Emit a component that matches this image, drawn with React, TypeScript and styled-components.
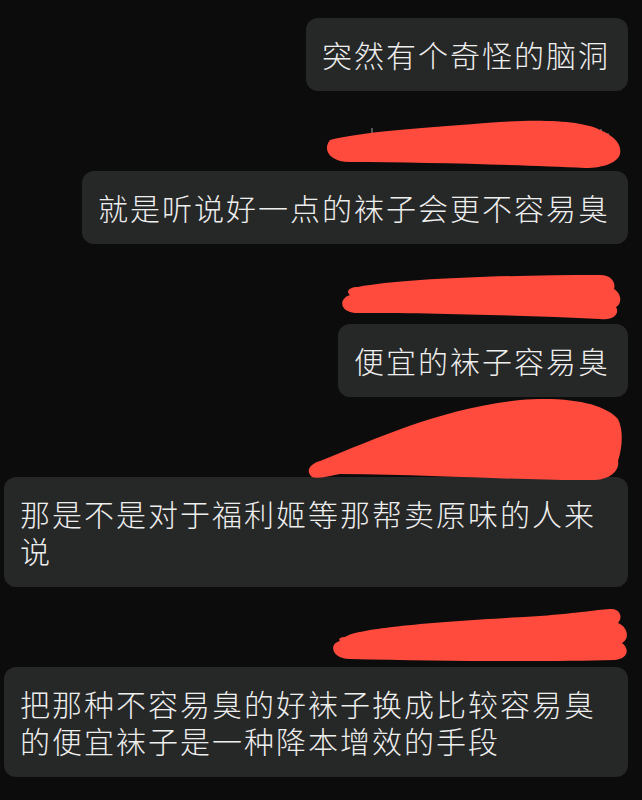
import React from 'react';
import styled, { createGlobalStyle } from 'styled-components';

const GlobalStyle = createGlobalStyle`
  html, body {
    margin: 0;
    padding: 0;
    background: #0c0c0c;
  }
  body {
    font-family: "Noto Sans CJK SC", "Noto Sans", sans-serif;
  }
`;

const Screen = styled.div`
  width: 642px;
  height: 800px;
  overflow: hidden;
  box-sizing: border-box;
  padding: 18px 14px 0 4px;
  background: #0c0c0c;
  display: flex;
  flex-direction: column;
  align-items: flex-end;
`;

const Bubble = styled.div`
  max-width: 624px;
  box-sizing: border-box;
  padding: 18px 18px 18px 16px;
  border-radius: 12px;
  background: #262727;
  color: #eeeeee;
  font-size: 30px;
  line-height: 37px;
  letter-spacing: 2px;
  font-weight: 300;
`;

const NameRow = styled.div`
  width: 624px;
  height: 80px;
  display: flex;
`;

const Scribble = styled.svg`
  position: relative;
  z-index: 1;
  overflow: visible;
  display: block;
`;

const RED = '#fe4b3d';

type Redaction = {
  top: number;
  paths: string[];
  ticks?: string[];
};

const redactions: Redaction[] = [
  {
    top: 91,
    paths: [
      'M 330 140 C 360 132, 420 128, 500 122 C 550 119, 585 122, 600 130 C 615 136, 622 145, 620 154 C 618 162, 605 168, 585 168 C 520 165, 420 162, 350 162 C 330 162, 322 150, 330 140 Z',
    ],
    ticks: ['M 372 128 L 372 135', 'M 601 129 L 601 137 M 601 134 L 609 134'],
  },
  {
    top: 245,
    paths: [
      'M 358 288 C 400 280, 500 276, 600 276 C 612 276, 616 284, 614 290 C 622 295, 622 305, 616 308 C 620 314, 614 322, 600 320 C 520 316, 420 314, 355 314 C 340 313, 338 300, 350 296 C 345 292, 350 288, 358 288 Z',
    ],
  },
  {
    top: 398,
    paths: [
      'M 312 478 C 305 472, 310 465, 320 462 C 380 438, 440 410, 520 401 C 570 397, 605 405, 618 420 C 624 432, 622 450, 618 462 C 620 470, 612 480, 595 481 C 530 482, 450 476, 340 475 C 325 478, 316 480, 312 478 Z',
    ],
  },
  {
    top: 588,
    paths: [
      'M 345 638 C 360 628, 450 622, 540 617 C 580 614, 600 610, 612 610 C 622 611, 622 620, 618 624 C 628 628, 630 640, 622 644 C 630 650, 628 660, 615 661 C 540 663, 440 662, 350 660 C 332 660, 328 645, 340 642 C 338 640, 340 638, 345 638 Z',
    ],
  },
];

function RedactedName({ data }: { data: Redaction }) {
  return (
    <NameRow>
      <Scribble width={624} height={80} viewBox={`4 ${data.top} 624 80`}>
        {data.ticks?.map((d, i) => (
          <path key={'t' + i} d={d} stroke='#8a8a8a' strokeWidth={1.2} fill='none' />
        ))}
        {data.paths.map((d, i) => (
          <path key={i} d={d} fill={RED} />
        ))}
      </Scribble>
    </NameRow>
  );
}

const messages = [
  '就是听说好一点的袜子会更不容易臭',
  '便宜的袜子容易臭',
  '那是不是对于福利姬等那帮卖原味的人来说',
  '把那种不容易臭的好袜子换成比较容易臭的便宜袜子是一种降本增效的手段',
];

export default function App() {
  return (
    <>
      <GlobalStyle />
      <Screen>
        <Bubble>突然有个奇怪的脑洞</Bubble>
        {messages.map((text, i) => (
          <React.Fragment key={i}>
            <RedactedName data={redactions[i]} />
            <Bubble>{text}</Bubble>
          </React.Fragment>
        ))}
      </Screen>
    </>
  );
}
